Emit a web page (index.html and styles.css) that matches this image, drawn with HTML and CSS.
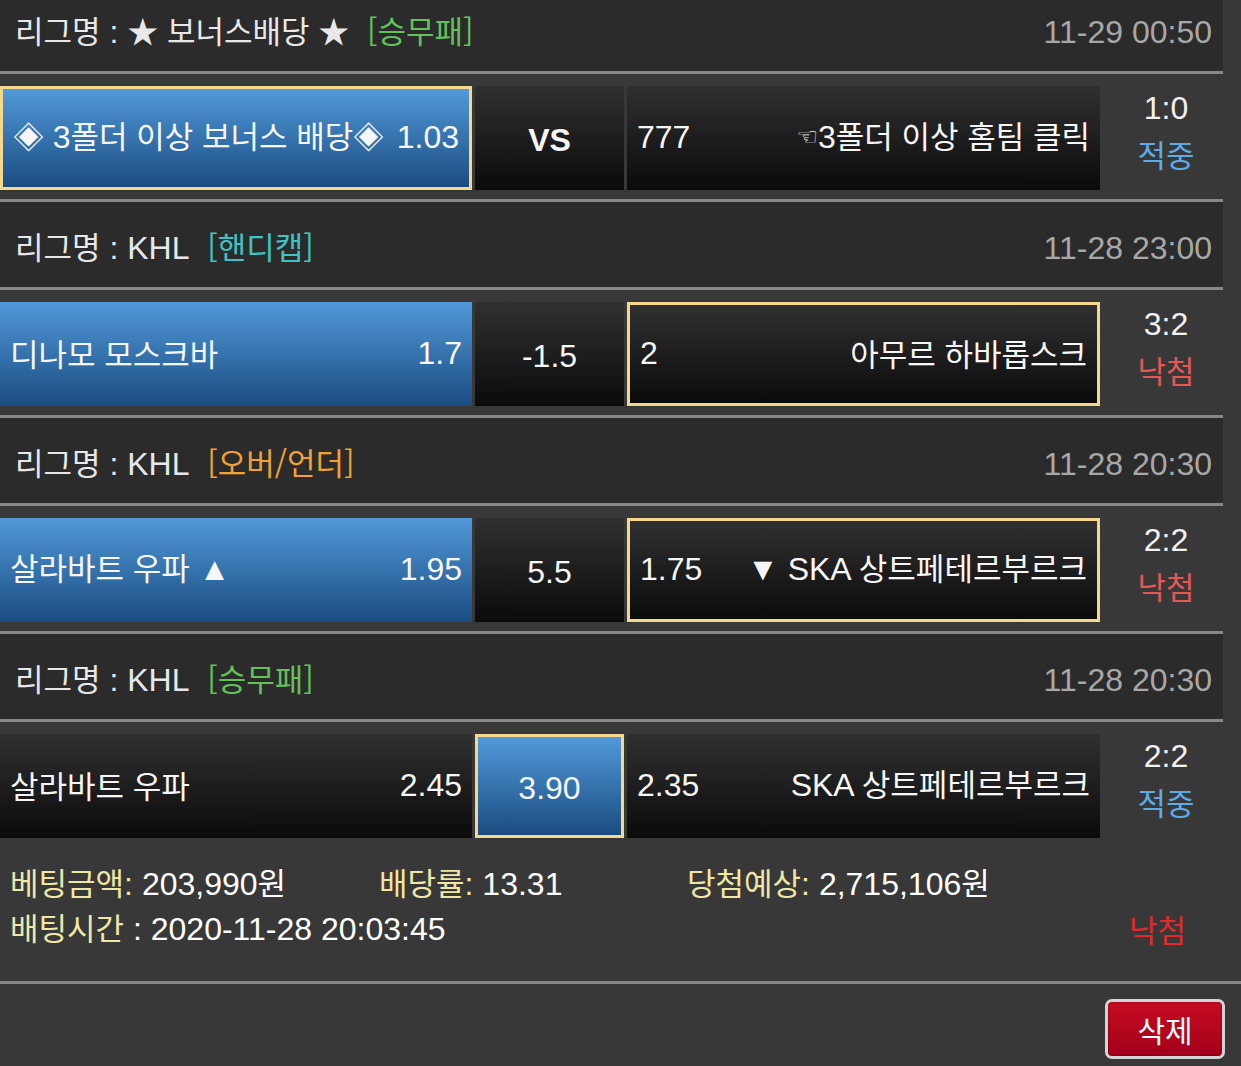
FILE: index.html
```html
<!DOCTYPE html>
<html lang="ko">
<head>
<meta charset="utf-8">
<title>배팅내역</title>
<link rel="stylesheet" href="styles.css">
</head>
<body>
<div class="list">
  <section class="game">
    <div class="league">
      <span class="league-name"><span class="k">리그명</span> : <span class="k">★ 보너스배당 ★</span>&nbsp;&nbsp;<span class="k type t-win">[승무패]</span></span>
      <span class="time">11-29 00:50</span>
    </div>
    <div class="odds">
      <div class="cell blue pick"><span><span class="k">◈ </span>3<span class="k">폴더 이상 보너스 배당◈</span></span><span>1.03</span></div>
      <div class="cell mid"><b>VS</b></div>
      <div class="cell"><span>777</span><span><span class="hand">☜</span>3<span class="k">폴더 이상 홈팀 클릭</span></span></div>
      <div class="result"><div>1:0</div><div class="k hit">적중</div></div>
    </div>
  </section>

  <section class="game">
    <div class="league">
      <span class="league-name"><span class="k">리그명</span> : KHL&nbsp;&nbsp;<span class="k type t-hcp">[핸디캡]</span></span>
      <span class="time">11-28 23:00</span>
    </div>
    <div class="odds">
      <div class="cell blue"><span class="k">디나모 모스크바</span><span>1.7</span></div>
      <div class="cell mid">-1.5</div>
      <div class="cell pick"><span>2</span><span class="k">아무르 하바롭스크</span></div>
      <div class="result"><div>3:2</div><div class="k miss">낙첨</div></div>
    </div>
  </section>

  <section class="game">
    <div class="league">
      <span class="league-name"><span class="k">리그명</span> : KHL&nbsp;&nbsp;<span class="k type t-ou">[오버/언더]</span></span>
      <span class="time">11-28 20:30</span>
    </div>
    <div class="odds">
      <div class="cell blue"><span><span class="k">살라바트 우파</span> ▲</span><span>1.95</span></div>
      <div class="cell mid">5.5</div>
      <div class="cell pick"><span>1.75</span><span>▼ SKA <span class="k">상트페테르부르크</span></span></div>
      <div class="result"><div>2:2</div><div class="k miss">낙첨</div></div>
    </div>
  </section>

  <section class="game">
    <div class="league">
      <span class="league-name"><span class="k">리그명</span> : KHL&nbsp;&nbsp;<span class="k type t-win">[승무패]</span></span>
      <span class="time">11-28 20:30</span>
    </div>
    <div class="odds">
      <div class="cell"><span class="k">살라바트 우파</span><span>2.45</span></div>
      <div class="cell mid blue pick">3.90</div>
      <div class="cell"><span>2.35</span><span>SKA <span class="k">상트페테르부르크</span></span></div>
      <div class="result"><div>2:2</div><div class="k hit">적중</div></div>
    </div>
  </section>
</div>

<div class="summary">
  <div class="sum-row">
    <span class="c1"><span class="k lbl">베팅금액</span><span class="lbl">:</span> 203,990<span class="k">원</span></span>
    <span class="c2"><span class="k lbl">배당률</span><span class="lbl">:</span> 13.31</span>
    <span class="c3"><span class="k lbl">당첨예상</span><span class="lbl">:</span> 2,715,106<span class="k">원</span></span>
  </div>
  <div class="sum-row r2">
    <span><span class="k lbl">배팅시간</span> : 2020-11-28 20:03:45</span>
    <span class="k status-miss">낙첨</span>
  </div>
</div>

<div class="actions">
  <button class="del" type="button">삭제</button>
</div>
</body>
</html>
```

FILE: styles.css
```css
html, body {
  margin: 0;
  padding: 0;
}

body {
  background: #383838;
  color: #ffffff;
  font-family: "Liberation Sans", "Noto Sans CJK KR", sans-serif;
  font-size: 32px;
  height: 1066px;
  overflow: hidden;
}

.k {
  font-family: "Noto Sans CJK KR", "Liberation Sans", sans-serif;
  font-size: 31px;
  line-height: 1;
}

.list {
  width: 1223px;
  margin-top: -14px;
}

.league {
  height: 85px;
  box-sizing: content-box;
  display: flex;
  align-items: center;
  justify-content: space-between;
  padding: 0 11px 0 15px;
  background: #2b2b2b;
  border-bottom: 3px solid #878787;
  color: #e8e8e8;
  line-height: 40px;
}

.league-name,
.time {
  padding-top: 6px;
}

.time {
  color: #a8a8a8;
}

.t-win { color: #62c15a; }
.t-hcp { color: #3fc4c4; }
.t-ou  { color: #f0a232; }

.odds {
  display: grid;
  grid-template-columns: 472px 149px 473px 1fr;
  grid-template-rows: 104px;
  column-gap: 3px;
  padding: 12px 0 9px;
}

.game:not(:last-child) .odds {
  border-bottom: 3px solid #878787;
}

.cell {
  box-sizing: border-box;
  display: flex;
  align-items: center;
  justify-content: space-between;
  padding: 0 10px 3px;
  background: linear-gradient(#303030, #0b0b0b);
  color: #f6f6f6;
  white-space: nowrap;
  line-height: 40px;
}

.cell.blue {
  background: linear-gradient(#5099d9, #1b4c81);
}

.cell.pick {
  border: 3px solid #f3d88d;
}

.cell.mid {
  justify-content: center;
  padding-top: 4px;
  padding-bottom: 0;
}

.hand {
  font-family: "DejaVu Sans", sans-serif;
  font-size: 24px;
  vertical-align: 3px;
}

.result {
  text-align: center;
  line-height: 45px;
  padding-left: 6px;
  color: #f2f2f2;
}

.result .k {
  line-height: 45px;
}

.hit  { color: #5eaae6; }
.miss { color: #e65656; }

.summary {
  padding: 14px 10px 30px;
  border-bottom: 3px solid #878787;
}

.sum-row {
  display: flex;
  align-items: center;
  height: 45px;
  line-height: 40px;
}

.sum-row .c1 { width: 369px; }
.sum-row .c2 { width: 308px; }

.sum-row.r2 {
  justify-content: space-between;
  padding-right: 45px;
}

.lbl {
  color: #efe7a6;
}

.status-miss {
  color: #e22a2a;
}

.actions {
  display: flex;
  justify-content: flex-end;
  padding: 15px 16px 0;
}

.del {
  width: 120px;
  height: 60px;
  border: 3px solid #d4d4d4;
  border-radius: 7px;
  background: linear-gradient(#c60c22, #a3001a);
  color: #ffffff;
  font-family: "Noto Sans CJK KR", sans-serif;
  font-size: 30px;
  padding: 0;
  box-shadow: inset 0 0 2px rgba(0, 0, 0, 0.5);
}
```
